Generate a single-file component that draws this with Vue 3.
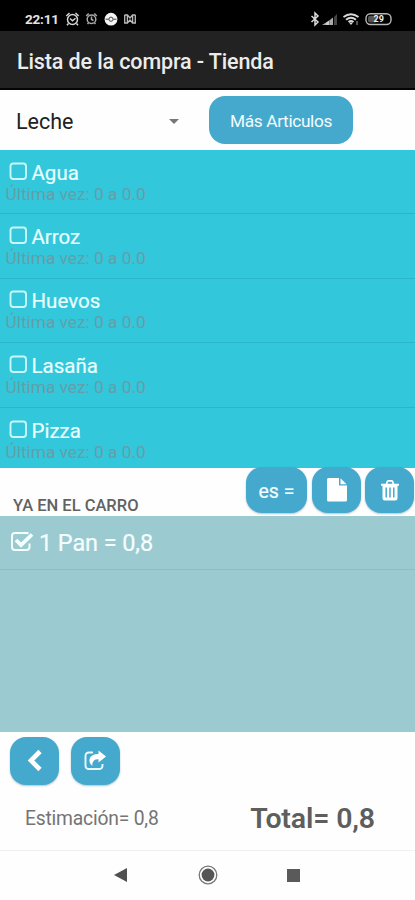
<script setup>
const items = ['Agua', 'Arroz', 'Huevos', 'Lasaña', 'Pizza']
</script>

<template>
  <div class="screen">
    <header class="status">
      <span class="clock">22:11</span>
      <svg class="left-icons" width="74" height="18" viewBox="0 0 74 18" fill="none" stroke="#d4d4d4" stroke-width="1.5">
        <circle cx="7.5" cy="9.5" r="5" />
        <path d="M1.3 6l3.2-3M13.7 6l-3.2-3M3.5 13.5L2 15.3M11.5 13.5l1.5 1.8M5 8.5l2.5 2.3 3-2.6" />
        <g stroke="#aaa"><circle cx="26.5" cy="9.2" r="4.3" /><path d="M21.2 6l2.5-2.5M31.8 6l-2.500-2.500M26.5 6.5v3l2 1M23.5 13l-1 1M29.5 13l1 1" /></g>
        <circle cx="46" cy="9.2" r="6.4" fill="#f4f4f4" stroke="none" />
        <path d="M40.5 9.2h3.2M48.3 9.2h3.2" stroke="#444" stroke-width="1" />
        <circle cx="46" cy="9.2" r="2.1" stroke="#444" stroke-width="1" />
        <path d="M59.7 4.7v9M70.3 4.7v9M62.4 5.5v7.5M67.6 5.5v7.5M59.7 5h2.7l2.6 3 2.6-3h2.7M59.7 13h2.7l2.6-3 2.6 3h2.7" stroke="#bbb" stroke-width="1.3" />
      </svg>
      <svg class="right-icons" width="86" height="18" viewBox="0 0 86 18" fill="none">
        <path d="M5.500 6l6.500 6-3 3V3l3 3-6.500 6" stroke="#ddd" stroke-width="1.500" />
        <path d="M16 15l4-2.500V15z" fill="#aaa" /><path d="M20 12.500l3.500-2.200V15H20z" fill="#ccc" /><path d="M23.500 10.300L27 7.500V15h-3.500z" fill="#aaa" /><path d="M28 7l3-3v11h-3z" fill="#444" />
        <g stroke="#d8d8d8" stroke-width="1.900"><path d="M37.500 7q7.500-5.600 15 0" /><path d="M40 9.800q5-4 10 0" /><path d="M42.500 12q2.500-2 5 0" /></g>
        <path d="M43 12.500h4L45 15z" fill="#ddd" /><path d="M51 11v4" stroke="#777" stroke-width="1.400" />
        <rect x="60" y="3.800" width="25" height="10.700" rx="4.500" stroke="#b8b8b8" stroke-width="1.400" />
        <rect x="62" y="5.800" width="9" height="6.800" rx="2" fill="#555" />
        <text x="67.500" y="12.400" fill="#eee" font-family="Roboto, sans-serif" font-size="9" font-weight="700">29</text>
      </svg>
    </header>
    <div class="titlebar"><h1>Lista de la compra - Tienda</h1></div>

    <div class="picker">
      <div class="select"><span>Leche</span><i class="caret"></i></div>
      <button class="btn more"><span>Más Articulos</span></button>
    </div>

    <ul class="list">
      <li v-for="name in items" :key="name">
        <div class="item">
          <svg width="19" height="19" viewBox="0 0 19 19"><rect x="1.500" y="1.500" width="15.500" height="15.500" rx="2.700" fill="none" stroke="#c9f7fb" stroke-width="1.900" /></svg>
          <span>{{ name }}</span>
        </div>
        <div class="last">Última vez: 0 a 0.0</div>
      </li>
    </ul>

    <div class="cart-head">
      <h2>YA EN EL CARRO</h2>
      <div class="tools">
        <button class="btn es"><span>es =</span></button>
        <button class="btn sq">
          <svg width="22" height="26" viewBox="0 0 22 26" fill="#fff"><path d="M2 1h11v7.500h8V23q0 1.500-1.500 1.500h-17Q1 24.500 1 23V2.500Q1 1 2.500 1z" /><path d="M14.500 1.200l6 6h-6z" /></svg>
        </button>
        <button class="btn sq">
          <svg width="20" height="23" viewBox="0 0 20 23"><path d="M6.500 5l.8-2.300q.4-.9 1.300-.9h2.800q.9 0 1.300.9l.8 2.300" fill="none" stroke="#fff" stroke-width="1.700" /><path d="M1 4.800h18v2h-1.500V19q0 2.500-2.500 2.500H5Q2.500 21.500 2.500 19V6.800H1z" fill="#fff" /><path d="M6.200 8.500v10M10 8.500v10M13.800 8.500v10" stroke="#45a9ce" stroke-width="1.500" /></svg>
        </button>
      </div>
    </div>

    <div class="cart">
      <div class="cart-item">
        <svg width="25" height="22" viewBox="0 0 25 22" fill="none" stroke="#f4ffff"><path d="M18.500 2.500Q18 2 16.500 2H5Q2 2 2 5v11q0 3 3 3h11.500q3 0 3-3v-3.500" stroke-width="2" /><path d="M6 9l5 5L22 3.500" stroke-width="3.800" /></svg>
        <span>1 Pan = 0,8</span>
      </div>
    </div>

    <div class="actions">
      <button class="btn sq">
        <svg width="16" height="22" viewBox="0 0 16 22"><path d="M13 1.500L4 10.500l9 9" fill="none" stroke="#fff" stroke-width="4.600" /></svg>
      </button>
      <button class="btn sq">
        <svg width="23" height="21" viewBox="0 0 23 21"><path d="M9 1.500H5Q1.500 1.500 1.500 5v9.500Q1.500 18 5 18h10q3.500 0 3.500-3.500V13" fill="none" stroke="#e8faff" stroke-width="1.900" /><path d="M14.500 -.5L22 5.500l-7.500 6V8.200Q8 7.800 8.300 15 5 12 5.500 8.500 6.500 3 14.500 3z" fill="#fff" /></svg>
      </button>
    </div>
    <div class="totals">
      <span class="estimate">Estimación= 0,8</span>
      <strong>Total= 0,8</strong>
    </div>
    <nav class="navbar">
      <svg width="14" height="14" viewBox="0 0 14 14"><path d="M13 0v14L0 7z" fill="#505050" /></svg>
      <svg width="20" height="20" viewBox="0 0 20 20"><circle cx="10" cy="10" r="8.800" fill="none" stroke="#777" stroke-width="1.300" /><circle cx="10" cy="10" r="6.400" fill="#555" /></svg>
      <svg width="13" height="13" viewBox="0 0 13 13"><path d="M0 0h13v13H0z" fill="#5a5a5a" /></svg>
    </nav>
  </div>
</template>

<style>
body { background: #fefefe; }
</style>

<style scoped>
.screen { width: 415px; height: 900px; display: flex; flex-direction: column; overflow: hidden; font-family: Roboto, sans-serif; background: #fefefe; white-space: nowrap; }
.screen > * { flex-shrink: 0; box-sizing: border-box; }
h1, h2, ul { margin: 0; padding: 0; }
ul { list-style: none; }
svg { display: block; flex-shrink: 0; overflow: visible; }
.status { height: 31px; background: #000; display: flex; align-items: center; padding: 7px 18px 0 25px; }
.clock { color: #e4e4e4; font-size: 13.500px; font-weight: 700; letter-spacing: -.2px; width: 40px; }
.right-icons { margin-left: auto; margin-right: 5px; }
.titlebar { height: 59px; background: #222; border-bottom: 2px solid #050505; padding: 1.500px 0 0 17px; display: flex; align-items: center; }
h1 { color: #ececec; font-size: 21.500px; font-weight: 500; letter-spacing: -.12px; line-height: 30px; padding-top: 3px; }
.picker { height: 60px; display: flex; align-items: center; padding-left: 16px; }
.select { width: 193px; display: flex; align-items: center; color: #222; font-size: 21.500px; padding-top: 2px; }
.select span { width: 152.500px; }
.caret { border: 5px solid transparent; border-top: 5.500px solid #777; border-bottom: 0; }
.btn { border: 0; margin: 0; padding: 0; border-radius: 16px; background: #45a9ce; color: #f2fcff; display: flex; align-items: center; justify-content: center; font-family: inherit; box-shadow: 0 1px 2px rgba(40, 90, 110, .35); }
.more { width: 144px; height: 48px; font-size: 17.300px; letter-spacing: -.36px; box-shadow: none; }
.more span { padding-top: 2px; }
.list { height: 318px; background: #33c7db; overflow: hidden; }
.list li { height: 64.650px; box-sizing: border-box; border-bottom: 1.500px solid #2bb5c9; padding-top: 9.500px; }
.list li:first-child { height: 64.200px; padding-top: 9.500px; }
.item { display: flex; align-items: center; height: 25px; padding-left: 9px; gap: 3.500px; color: #e9ffff; font-size: 20.500px; }
.item svg { margin-top: -2px; }
.item span { -webkit-text-stroke: .2px currentColor; padding-top: 1px; }
.last { padding-left: 5.500px; margin-top: -1px; color: #649ea9; font-size: 17.300px; line-height: 20px; }
.cart-head { height: 48px; display: flex; justify-content: space-between; padding-left: 13px; }
h2 { color: #626262; font-size: 16.500px; font-weight: 500; line-height: 20px; padding-top: 28px; }
.tools { display: flex; gap: 5px; padding-right: 1px; margin-top: -1px; height: 46px; }
.tools .btn { height: 46px; }
.es { width: 61px; font-size: 19.500px; -webkit-text-stroke: .2px currentColor; }
.es span { padding-top: 2px; }
.sq { width: 49px; height: 48px; }
.tools .sq:last-child { margin-left: -1px; }
.cart { height: 215.500px; background: #9bcbd1; }
.cart-item { height: 54px; box-sizing: border-box; border-bottom: 1.500px solid #8cbec4; display: flex; align-items: center; padding-left: 9.500px; gap: 4.500px; color: #f4ffff; font-size: 23.500px; letter-spacing: -.1px; -webkit-text-stroke: .2px currentColor; }
.cart-item svg { margin-top: -1px; }
.actions { display: flex; gap: 12px; padding: 5.500px 0 0 10px; height: 56px; }
.totals { height: 62px; display: flex; justify-content: space-between; align-items: center; padding: 0 40px 0 25px; color: #747474; }
.estimate { font-size: 19.300px; letter-spacing: -.2px; }
strong { font-size: 28.500px; font-weight: 600; letter-spacing: -.15px; color: #5e5e5e; }
.navbar { flex: 1; border-top: 1px solid #f0f0f0; display: flex; align-items: center; padding: 0 115px 0 114px; justify-content: space-between; }
</style>
